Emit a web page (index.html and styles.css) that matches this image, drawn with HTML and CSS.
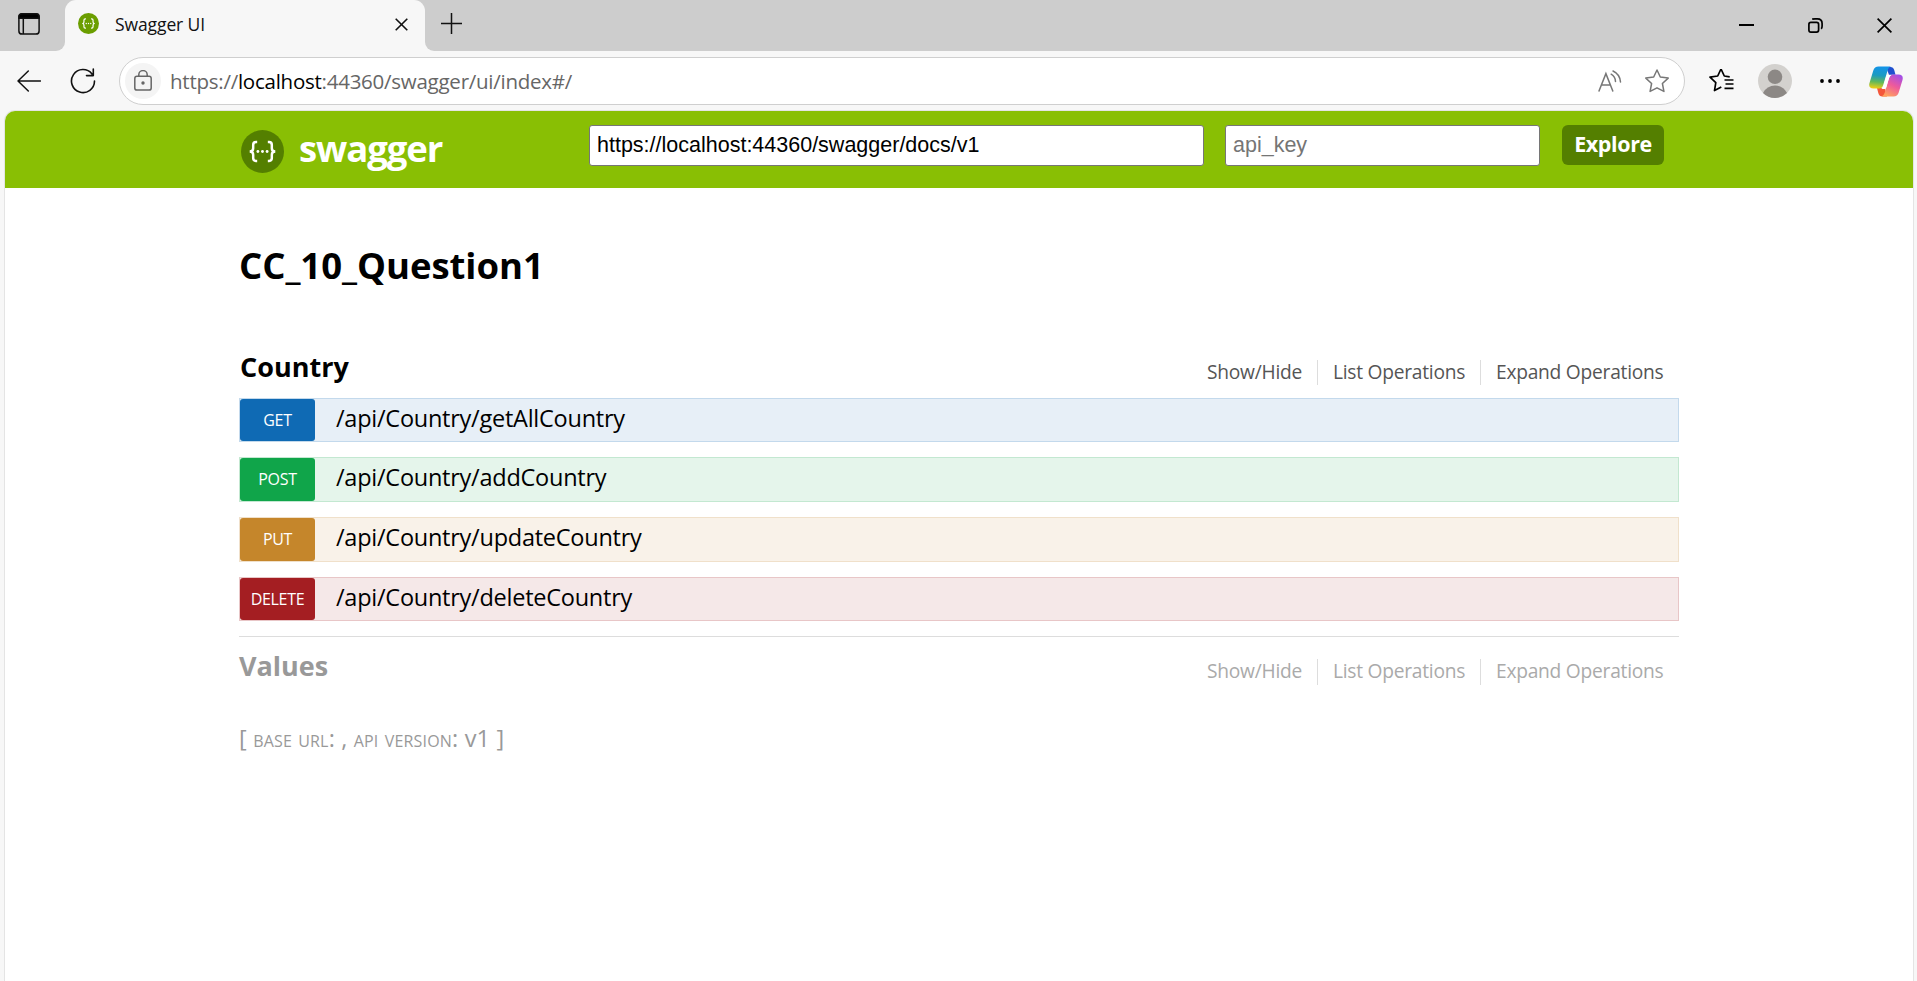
FILE: index.html
```
<!DOCTYPE html>
<html lang="en">
<head>
<meta charset="utf-8">
<title>Swagger UI</title>
<link rel="stylesheet" href="styles.css">
</head>
<body>
<header class="tabstrip">
  <div class="strip-left">
    <svg class="ic-tabs" width="22" height="22" viewBox="0 0 22 22" fill="none" stroke="#111" stroke-width="1.5"><rect x=".9" y=".9" width="20.2" height="20.2" rx="3.2"/><path d="M1 3.5Q1 .8 3.8.8h14.4Q21 .8 21 3.5V5.2H1Z" fill="#000"/><path d="M5.3 5v16"/></svg>
  </div>
  <div class="tab-holder">
    <div class="tab">
      <svg class="favicon" width="21" height="21" viewBox="0 0 42 42"><circle cx="21" cy="21" r="21" fill="#6b9e00"/><use href="#braces" stroke="#fff" fill="#fff"/></svg>
      <span class="tab-title">Swagger UI</span>
      <svg class="tab-close" width="13" height="13" viewBox="0 0 13 13" stroke="#111" stroke-width="1.6"><path d="M.7.7l11.6 11.6M12.3.7L.7 12.3"/></svg>
    </div>
  </div>
  <div class="strip-right">
    <svg class="ic-plus" width="21" height="21" viewBox="0 0 21 21" stroke="#111" stroke-width="1.5"><path d="M10.5 0v21M0 10.5h21"/></svg>
    <div class="win-controls">
      <svg width="15" height="15" viewBox="0 0 15 15" stroke="#000" stroke-width="2"><path d="M0 7h15"/></svg>
      <svg width="15" height="15" viewBox="0 0 15 15" fill="none" stroke="#000" stroke-width="1.7"><rect x=".9" y="4.4" width="9.7" height="9.7" rx="2"/><path d="M4.2 1.1Q5 .9 7 .9h2.4Q14.1.9 14.1 5.6V8q0 2-.9 2.8"/></svg>
      <svg width="15" height="15" viewBox="0 0 15 15" stroke="#000" stroke-width="1.7"><path d="M.6.6l13.8 13.8M14.4.6L.6 14.4"/></svg>
    </div>
  </div>
</header>

<nav class="toolbar">
  <svg class="ic-back" width="24" height="22" viewBox="0 0 24 22" fill="none" stroke="#111" stroke-width="1.5" stroke-linecap="round" stroke-linejoin="round"><path d="M23.5 11H1M11.3 1L1 11l10.3 10"/></svg>
  <svg class="ic-reload" width="26" height="26" viewBox="0 0 26 26" fill="none" stroke="#111" stroke-width="1.6" stroke-linecap="round" stroke-linejoin="round"><path d="M24.5 13A11.5 11.5 0 1 1 22 5.9M23.3 1v6.6h-6.8"/></svg>
  <div class="address">
    <span class="lock"><svg width="18" height="21" viewBox="0 0 18 21" fill="none" stroke="#666" stroke-width="1.5"><rect x=".8" y="6.3" width="16.4" height="13.8" rx="2.2"/><path d="M4.8 6V4.8a4.2 4.2 0 0 1 8.4 0V6"/><circle cx="9" cy="13" r="1.7" fill="#666" stroke="none"/></svg></span>
    <span class="url">https://<b>localhost</b>:44360/swagger/ui/index#/</span>
    <svg class="ic-read" width="24" height="22" viewBox="0 0 24 22" fill="none" stroke="#777" stroke-width="1.5" stroke-linecap="round"><path d="M1 21L7.900 3.600 14.800 21M3.500 15h8.900M13.200 4.200q4 2.200 4.300 7.300M15 1q7 3.400 7.500 11"/></svg>
    <svg class="ic-star" width="24" height="24" viewBox="0 0 24 24" fill="none" stroke="#777" stroke-width="1.5" stroke-linejoin="round"><path d="M12 1l3.300 7 7.900 1.100-5.800 5.400 1.500 7.900L12 18.800l-6.900 3.600 1.500-7.900L.8 9.100 8.700 8Z"/></svg>
  </div>
  <svg class="ic-fav" width="25" height="24" viewBox="0 0 25 24" fill="none" stroke="#000" stroke-width="1.7" stroke-linejoin="round"><path d="M12.300 19l-6.800 3.600 1.300-8L1 9.200 8.700 8 12 1l3.300 7 5.400.8M15.500 12H24.500M16.500 16H24.500M15.500 20.300H24.500" transform="translate(0 -1)"/></svg>
  <svg class="ic-avatar" width="34" height="34" viewBox="0 0 34 34"><circle cx="17" cy="17" r="17" fill="#d3d1ce"/><circle cx="17" cy="12.800" r="7.300" fill="#8c8885"/><path d="M5 29Q9 21.500 17 21.500T29 29Q24 34 17 34T5 29Z" fill="#8c8885"/></svg>
  <svg class="ic-dots" width="20" height="4" viewBox="0 0 20 4"><circle cx="2" cy="2" r="1.900"/><circle cx="10" cy="2" r="1.900"/><circle cx="18" cy="2" r="1.900"/></svg>
  <svg class="ic-copilot" width="34" height="31" viewBox="0 0 34 31">
    <defs>
      <linearGradient id="cpA" x1=".4" y1="0" x2=".3" y2="1"><stop offset="0" stop-color="#1394e8"/><stop offset=".4" stop-color="#1b9bc0"/><stop offset=".7" stop-color="#62b85a"/><stop offset="1" stop-color="#f2cf13"/></linearGradient>
      <linearGradient id="cpB" x1=".8" y1="0" x2=".3" y2="1"><stop offset="0" stop-color="#a24ee8"/><stop offset=".5" stop-color="#ee5a9b"/><stop offset="1" stop-color="#ffa45c"/></linearGradient>
    </defs>
    <path d="M17 1h4.500q2.800 0 3.700 3l1.300 4.700H20Z" fill="#2050cf"/>
    <path d="M8 22l1.300 5q.9 3.500 4.200 3.500H18L16 22Z" fill="#f4573b"/>
    <path d="M9.500.5H22q-2.500.5-3.400 4L14.200 19q-1 3.500-4.200 3.500H4.500Q-1 22.500.5 17L4.300 4.500Q5.500.5 9.500.5Z" fill="url(#cpA)"/>
    <path d="M24.500 30.500H12.500q2.400-.8 3.300-4L20 12q1-3.500 4.200-3.500h5.300q5.300 0 4 5.500l-3.800 12.500q-1.200 4-5.200 4Z" fill="url(#cpB)"/>
    <path d="M18.200 9H22.500q-1.700 1-2.400 3l-2.700 9Q16.700 22.500 15.700 23H12.300q1.500-1 2.200-3.200L17 11Q17.400 9.700 18.200 9Z" fill="#fff"/>
  </svg>
</nav>

<main class="page">
  <div class="sw-header">
    <div class="sw-bar">
      <svg class="sw-logo" width="43" height="43" viewBox="0 0 42 42"><defs><g id="braces"><path fill="none" stroke-width="2.400" d="M15.800 11.800h-1.300q-2.600 0-2.600 2.800v3.200q0 3.200-3.400 3.200 3.400 0 3.400 3.200v3.200q0 2.800 2.600 2.800h1.300M26.200 11.800h1.300q2.600 0 2.600 2.800v3.200q0 3.200 3.400 3.200-3.400 0-3.400 3.200v3.200q0 2.800-2.600 2.800h-1.300"/><g stroke="none"><circle cx="16.500" cy="21" r="1.400"/><circle cx="21" cy="21" r="1.400"/><circle cx="25.500" cy="21" r="1.400"/></g></g></defs><circle cx="21" cy="21" r="21" fill="#547f00"/><use href="#braces" stroke="#fff" fill="#fff"/></svg>
      <span class="sw-name">swagger</span>
      <input class="in-url" type="text" value="https://localhost:44360/swagger/docs/v1">
      <input class="in-key" type="text" placeholder="api_key">
      <a class="explore">Explore</a>
    </div>
  </div>

  <div class="sw-body">
    <h1>CC_10_Question1</h1>

    <section class="resource">
      <div class="res-head">
        <h2>Country</h2>
        <ul class="options"><li class="o1">Show/Hide</li><li class="o2">List Operations</li><li class="o3">Expand Operations</li></ul>
      </div>
      <div class="ops">
        <div class="op get"><span class="method">GET</span><span class="path">/api/Country/getAllCountry</span></div>
        <div class="op post"><span class="method">POST</span><span class="path">/api/Country/addCountry</span></div>
        <div class="op put"><span class="method">PUT</span><span class="path">/api/Country/updateCountry</span></div>
        <div class="op delete"><span class="method">DELETE</span><span class="path">/api/Country/deleteCountry</span></div>
      </div>
    </section>

    <section class="resource collapsed">
      <div class="res-head">
        <h2>Values</h2>
        <ul class="options"><li class="o1">Show/Hide</li><li class="o2">List Operations</li><li class="o3">Expand Operations</li></ul>
      </div>
    </section>

    <div class="footer">[ <span class="sc">base url</span>: , <span class="sc">api version</span>: v1 ]</div>
  </div>
</main>
</body>
</html>
```
FILE: styles.css
```
* { box-sizing: border-box; margin: 0; padding: 0; }
html, body { height: 981px; overflow: hidden; }
body {
  display: flex;
  flex-direction: column;
  background: #f7f7f7;
  font-family: "Open Sans", "Noto Sans", sans-serif;
  white-space: nowrap;
}
svg { display: block; flex: none; }

/* tab strip */
.tabstrip { display: flex; flex: none; height: 51px; }
.strip-left {
  width: 65px;
  background: #cdcdcd;
  border-bottom-right-radius: 9px;
  padding: 13px 0 0 18px;
}
.tab-holder { width: 360px; background: linear-gradient(#cdcdcd 50%, #f7f7f7 50%); }
.tab {
  height: 51px;
  display: flex;
  align-items: center;
  background: #f7f7f7;
  border-radius: 11px 11px 0 0;
  padding: 0 17px 4px 13px;
}
.tab-title { flex: 1; margin-left: 16px; font-size: 17.5px; line-height: 24px; letter-spacing: -0.1px; color: #111; }
.tab-close { margin-top: 2px; }
.strip-right {
  flex: 1;
  display: flex;
  justify-content: space-between;
  background: #cdcdcd;
  border-bottom-left-radius: 9px;
  padding: 13px 25px 0 16px;
}
.win-controls { display: flex; gap: 54px; padding-top: 5px; }

/* toolbar */
.toolbar { display: flex; flex: none; align-items: center; height: 59px; padding-top: 1px; }
.ic-back { margin-left: 17px; }
.ic-reload { margin-left: 29px; }
.address {
  display: flex;
  align-items: center;
  width: 1566px;
  height: 48px;
  margin-left: 23px;
  border: 1.5px solid #cfcfcf;
  border-radius: 24px;
  background: #fff;
  padding: 0 15px 0 5px;
}
.lock {
  display: flex;
  align-items: center;
  justify-content: center;
  width: 36px;
  height: 36px;
  border-radius: 50%;
  background: #f4f4f4;
  padding-bottom: 2px;
}
.url { flex: 1; margin-left: 9px; font-size: 20.5px; line-height: 28px; letter-spacing: -0.25px; color: #666; }
.url b { font-weight: 400; color: #000; }
.ic-star { margin-left: 23px; }
.ic-fav { margin-left: 24px; }
.ic-avatar { margin-left: 24px; }
.ic-dots { margin-left: 28px; }
.ic-copilot { margin-left: 29px; }

/* web page */
.page {
  flex: 1;
  margin: 0 3px 0 4px;
  border: 1px solid #e4e4e4;
  border-bottom: 0;
  border-radius: 11px 11px 0 0;
  background: #fff;
  overflow: hidden;
}
.sw-header { height: 77px; background: #89bf04; padding: 14px 0 0 234px; }
.sw-bar { display: flex; width: 1440px; align-items: flex-start; }
.sw-logo { margin: 5px 0 0 2px; }
.sw-name {
  width: 289px;
  margin: 3px 0 0 15px;
  font-size: 36.5px;
  line-height: 40px;
  font-weight: 700;
  letter-spacing: -1.1px;
  color: #fff;
}
.in-url, .in-key {
  height: 41px;
  border: 1px solid #767676;
  border-radius: 3px;
  padding: 0 6px 1px 7px;
  background: #fff;
  color: #000;
  font-family: "Liberation Sans", Arial, sans-serif;
  font-size: 21.5px;
}
.in-key::placeholder { color: #757575; }
.in-url { width: 615px; margin-left: 1px; }
.in-key { width: 315px; margin-left: 21px; }
.explore {
  width: 102px;
  height: 40px;
  margin-left: 22px;
  border-radius: 6px;
  background: #547f00;
  color: #fff;
  font-size: 21.5px;
  font-weight: 700;
  line-height: 38px;
  letter-spacing: -0.4px;
  text-align: center;
}

.sw-body { width: 1440px; margin-left: 234px; padding-top: 52px; }
h1 { font-size: 36.5px; line-height: 50px; letter-spacing: -0.05px; color: #000; margin-bottom: 63px; }
.res-head { display: flex; justify-content: space-between; height: 45px; }
h2 { padding-left: 1px; font-size: 27px; line-height: 28px; letter-spacing: 0; color: #000; }
.options {
  display: grid;
  grid-template-columns: 113px 163px 198px;
  height: 25px;
  margin-top: 7px;
  list-style: none;
  font-size: 19.2px;
  line-height: 24px;
  letter-spacing: -0.25px;
  color: #555;
}
.options li { border-right: 1px solid #ddd; padding-left: 15px; }
.options .o1 { padding-left: 2px; }
.options .o3 { border-right: 0; }

.ops { display: grid; grid-template-rows: 44px 45px 45px 44px; gap: 15px; padding-bottom: 15px; }
.op { display: flex; border: 1px solid; }
.method {
  width: 75px;
  border-radius: 3px;
  color: #fff;
  font-size: 16px;
  line-height: 43px;
  letter-spacing: -0.3px;
  text-align: center;
}
.path { margin-left: 21px; font-size: 23.5px; line-height: 38px; letter-spacing: -0.25px; color: #000; }
.get { background: #e7eff7; border-color: #c3d9ec; }
.get .method { background: #0f6ab4; }
.post { background: #e5f5eb; border-color: #c3e8d1; }
.post .method { background: #10a54a; }
.put { background: #f9f2e9; border-color: #f0e0ca; }
.put .method { background: #c5862b; }
.delete { background: #f5e8e8; border-color: #e8c6c7; }
.delete .method { background: #a41e22; }

.collapsed { border-top: 1px solid #ddd; padding-top: 15px; }
.collapsed h2 { padding-left: 0; color: #999; }
.collapsed .options { height: 26px; color: #aaa; }

.footer { margin-top: 26px; font-size: 23.5px; line-height: 30px; letter-spacing: 0.17px; color: #999; }
.sc { font-variant: small-caps; }
```
